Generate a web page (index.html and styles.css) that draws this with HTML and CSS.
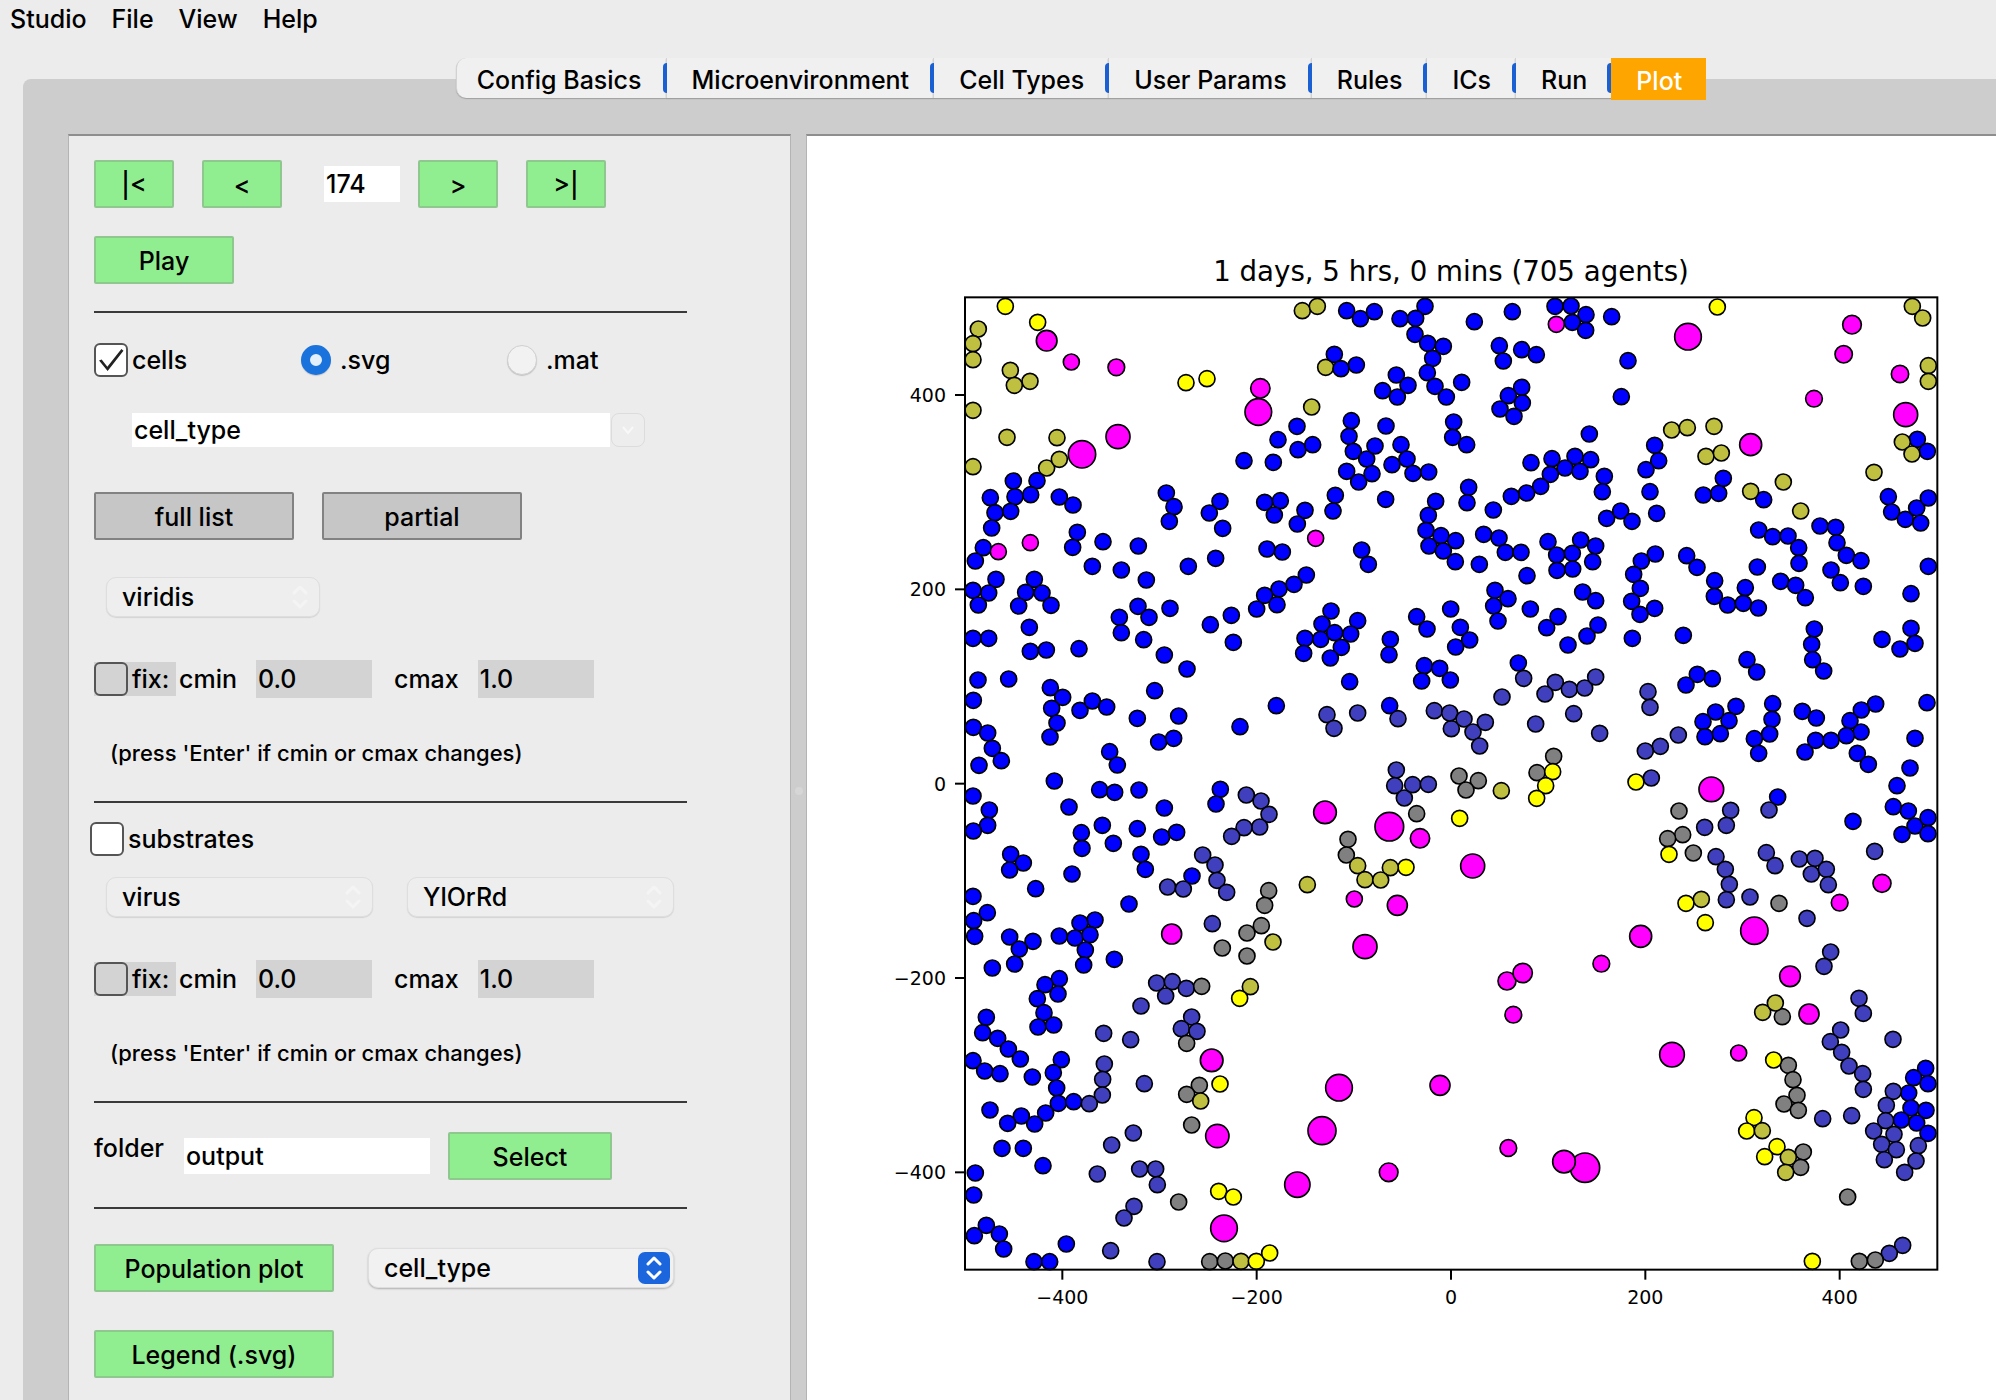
FILE: index.html
```html
<!DOCTYPE html>
<html lang="en">
<head>
    <meta charset="UTF-8">
    <meta name="viewport" content="width=device-width, initial-scale=1.0">
    <title>Studio</title>
    <link rel="stylesheet" href="styles.css">
</head>
<body>
    <nav class="menubar">
        <button type="button">Studio</button>
        <button type="button">File</button>
        <button type="button">View</button>
        <button type="button">Help</button>
    </nav>

    <div class="tabs" role="tablist">
        <button type="button" role="tab">Config Basics</button>
        <button type="button" role="tab">Microenvironment</button>
        <button type="button" role="tab">Cell Types</button>
        <button type="button" role="tab">User Params</button>
        <button type="button" role="tab">Rules</button>
        <button type="button" role="tab">ICs</button>
        <button type="button" role="tab">Run</button>
        <button type="button" role="tab" class="active" aria-selected="true">Plot</button>
    </div>

    <main class="frame">
        <form class="controls">
            <div class="row player">
                <button type="button" class="btn step">|&lt;</button>
                <button type="button" class="btn step">&lt;</button>
                <input type="text" class="field frame-number" value="174" aria-label="Frame">
                <button type="button" class="btn step">&gt;</button>
                <button type="button" class="btn step">&gt;|</button>
            </div>
            <div class="row play-row">
                <button type="button" class="btn play">Play</button>
            </div>

            <hr>

            <div class="row cells-row">
                <label class="check cells"><input type="checkbox" checked>cells</label>
                <label class="radio"><input type="radio" name="format" checked>.svg</label>
                <label class="radio"><input type="radio" name="format">.mat</label>
            </div>
            <div class="row combo">
                <input type="text" class="field" value="cell_type" aria-label="Cell variable">
                <button type="button" class="combo-arrow" aria-label="Show list">
                    <svg viewBox="0 0 16 16"><path d="M3 5l5 6 5-6"/></svg>
                </button>
            </div>
            <div class="row list-row">
                <button type="button" class="btn grey">full list</button>
                <button type="button" class="btn grey">partial</button>
            </div>
            <div class="row select-row">
                <span class="select disabled cmap">
                    <select aria-label="Cell colormap"><option>viridis</option></select>
                    <svg viewBox="0 0 32 32"><path d="M10 12l6-6 6 6M10 20l6 6 6-6"/></svg>
                </span>
            </div>
            <div class="row fix-row">
                <label class="check fix"><input type="checkbox">fix:</label>
                <label for="cells-cmin">cmin</label>
                <input type="text" id="cells-cmin" class="range" value="0.0">
                <label for="cells-cmax">cmax</label>
                <input type="text" id="cells-cmax" class="range" value="1.0">
            </div>
            <p class="hint">(press 'Enter' if cmin or cmax changes)</p>

            <hr>

            <div class="row substrates-row">
                <label class="check"><input type="checkbox">substrates</label>
            </div>
            <div class="row select-row near">
                <span class="select disabled substrate">
                    <select aria-label="Substrate"><option>virus</option></select>
                    <svg viewBox="0 0 32 32"><path d="M10 12l6-6 6 6M10 20l6 6 6-6"/></svg>
                </span>
                <span class="select disabled substrate">
                    <select aria-label="Substrate colormap"><option>YlOrRd</option></select>
                    <svg viewBox="0 0 32 32"><path d="M10 12l6-6 6 6M10 20l6 6 6-6"/></svg>
                </span>
            </div>
            <div class="row fix-row">
                <label class="check fix"><input type="checkbox">fix:</label>
                <label for="sub-cmin">cmin</label>
                <input type="text" id="sub-cmin" class="range" value="0.0">
                <label for="sub-cmax">cmax</label>
                <input type="text" id="sub-cmax" class="range" value="1.0">
            </div>
            <p class="hint">(press 'Enter' if cmin or cmax changes)</p>

            <hr>

            <div class="row folder-row">
                <label for="folder">folder</label>
                <input type="text" id="folder" class="field" value="output">
                <button type="button" class="btn">Select</button>
            </div>

            <hr>

            <div class="row population-row">
                <button type="button" class="btn wide">Population plot</button>
                <span class="select">
                    <select aria-label="Population variable"><option>cell_type</option></select>
                    <svg viewBox="0 0 32 32"><path d="M10 12l6-6 6 6M10 20l6 6 6-6"/></svg>
                </span>
            </div>
            <div class="row legend-row">
                <button type="button" class="btn wide">Legend (.svg)</button>
            </div>
        </form>

        <div class="splitter"></div>

        <section class="canvas">
            <svg class="plot" viewBox="-459 -464 3567 3792">
                <text class="title" x="1473" y="-29">1 days, 5 hrs, 0 mins (705 agents)</text>
                <g id="agents"></g>
                <rect class="axes" x="15" y="20" width="2917" height="2917"/>
                <g id="ticks"></g>
            </svg>
        </section>
    </main>

    <script src="script.js"></script>
</body>
</html>
```

FILE: styles.css
```css
* {
    box-sizing: border-box;
}
body {
    display: flex;
    flex-direction: column;
    height: 100vh;
    margin: 0;
    overflow: hidden;
    background-color: #ececec;
    color: #000;
    font-family: Inter, "Liberation Sans", sans-serif;
    font-size: 25px;
    font-weight: 500;
    line-height: 30px;
}
button, input, select {
    margin: 0;
    color: inherit;
    font: inherit;
}

/* menu */
.menubar {
    display: flex;
    gap: 25px;
    height: 58px;
    padding: 4px 10px;
}
.menubar button {
    height: 30px;
    padding: 0;
    border: none;
    background: none;
}

/* tabs */
.tabs {
    position: relative;
    z-index: 1;
    display: flex;
    justify-content: center;
    height: 42px;
    padding-left: 166px;
}
.tabs button {
    position: relative;
    height: 40px;
    padding: 3px 24px 0 25px;
    border: none;
    border-left: 1px solid #d2d2d2;
    background-color: #f0f0f0;
    box-shadow: 0 1px 1px #a0a0a0;
    white-space: nowrap;
}
.tabs button:first-child {
    padding-left: 20px;
    border-radius: 10px 0 0 10px;
}
.tabs button + button::before {
    content: "";
    position: absolute;
    top: 5px;
    left: -4px;
    width: 4px;
    height: 30px;
    border-radius: 4px 0 0 4px;
    background-color: #1a60d2;
}
.tabs .active {
    height: 42px;
    border: none;
    background-color: #ffa500;
    box-shadow: none;
    color: #fff;
}

/* main area */
.frame {
    display: flex;
    flex: 1;
    min-height: 0;
    margin: -21px 0 0 23px;
    padding: 55px 0 0 45px;
    border-radius: 8px 0 0 0;
    background-color: #cdcdcd;
}
.controls {
    flex: 0 0 723px;
    padding: 24px 24px 0 25px;
    border: 1px solid #b4b4b4;
    border-top: 2px solid #8e8e8e;
    border-bottom: none;
    background-color: #ececec;
}
.splitter {
    display: flex;
    flex: 0 0 15px;
    align-items: center;
    justify-content: center;
}
.splitter::before {
    content: "";
    width: 8px;
    height: 8px;
    margin-bottom: -48px;
    border-radius: 50%;
    background-color: #d6d6d6;
}
.canvas {
    flex: 1;
    min-width: 0;
    border-top: 2px solid #8e8e8e;
    border-left: 1px solid #b4b4b4;
    background-color: #fff;
}

/* controls */
.row {
    display: flex;
    align-items: center;
}
hr {
    width: 593px;
    height: 2px;
    margin: 0;
    border: none;
    background-color: #3a3a3a;
}
.btn {
    height: 48px;
    padding: 2px 0 0;
    border: 2px solid #8fc88f;
    border-radius: 2px;
    background-color: #90ee90;
}
.btn.grey {
    width: 200px;
    border-color: #828282;
    background-color: #c6c6c6;
}
.btn.wide {
    width: 240px;
}
.step {
    width: 80px;
}
.play {
    width: 140px;
}
.field {
    height: 36px;
    padding: 0 2px;
    border: none;
    background-color: #fff;
}
.player {
    gap: 28px;
}
.frame-number {
    width: 76px;
    margin: 0 -10px 0 14px;
}
.play-row {
    margin: 28px 0 27px;
}
.cells-row {
    height: 34px;
    margin: 30px 0 36px;
}
.check {
    display: flex;
    align-items: center;
    gap: 4px;
}
.check input {
    display: grid;
    place-content: center;
    width: 34px;
    height: 34px;
    border: 2px solid #555;
    border-radius: 6px;
    background-color: #fff;
    appearance: none;
}
.check input:checked::before {
    content: "";
    width: 26px;
    height: 26px;
    background-color: #222;
    clip-path: polygon(4% 52%, 14% 48%, 36% 76%, 90% 8%, 98% 14%, 37% 92%);
}
.cells {
    width: 207px;
}
.radio {
    display: flex;
    align-items: center;
    gap: 9px;
    width: 206px;
}
.radio input {
    width: 30px;
    height: 30px;
    border: 1px solid #d0d0d0;
    border-radius: 50%;
    background-color: #f2f2f2;
    box-shadow: 0 1px 1px #c4c4c4;
    appearance: none;
}
.radio input:checked {
    border: 9px solid #1a72dc;
    background-color: #e4effc;
}
.combo {
    gap: 1px;
    margin-left: 38px;
}
.combo .field {
    width: 478px;
    height: 34px;
}
.combo-arrow {
    width: 34px;
    height: 34px;
    padding: 8px;
    border: 1px solid #dcdcdc;
    border-radius: 8px;
    background-color: #ededed;
}
.combo-arrow svg {
    display: block;
    fill: none;
    stroke: #f8f8f8;
    stroke-width: 2;
}
.list-row {
    gap: 28px;
    margin: 45px 0 37px;
}
.select-row {
    gap: 34px;
    margin-left: 12px;
}
.select-row.near {
    margin-top: 21px;
}
.select {
    position: relative;
    width: 306px;
}
.select select {
    display: block;
    width: 100%;
    height: 40px;
    padding: 0 15px;
    border: 1px solid #dedede;
    border-radius: 10px;
    background-color: #f1f1f1;
    box-shadow: 0 1px 2px #b0b0b0;
    appearance: none;
}
.select svg {
    position: absolute;
    top: 4px;
    right: 4px;
    width: 32px;
    height: 32px;
    border-radius: 7px;
    background-color: #1b65dd;
    fill: none;
    stroke: #fff;
    stroke-width: 3;
    stroke-linecap: round;
    stroke-linejoin: round;
    pointer-events: none;
}
.select.disabled select {
    background-color: #eee;
    box-shadow: 0 1px 1px #d4d4d4;
}
.select.disabled svg {
    background: none;
    stroke: #f4f4f4;
}
.cmap {
    width: 214px;
}
.substrate {
    width: 267px;
}
.fix-row {
    margin: 43px 0 41px;
}
.fix {
    width: 82px;
    margin-right: 3px;
    background-color: #d3d3d3;
}
.fix input {
    background-color: #d3d3d3;
}
.range {
    width: 116px;
    height: 38px;
    margin: 0 22px 0 19px;
    padding: 0 2px;
    border: none;
    background-color: #d3d3d3;
}
.hint {
    height: 28px;
    margin: 0 0 34px 16px;
    font-size: 22px;
    line-height: 28px;
}
.substrates-row {
    margin: 19px 0 0 -4px;
}
.folder-row {
    margin: 29px 0 27px;
}
.folder-row label {
    width: 90px;
    padding-bottom: 16px;
}
.folder-row .field {
    width: 246px;
    margin-right: 18px;
}
.folder-row .btn {
    width: 164px;
}
.population-row {
    gap: 34px;
    margin: 35px 0 38px;
}

/* plot */
.plot {
    display: block;
    width: 100%;
    font-family: "DejaVu Sans", sans-serif;
    font-weight: 400;
}
.plot text {
    font-size: 57px;
}
.plot .title {
    font-size: 83px;
    text-anchor: middle;
}
.axes {
    fill: none;
    stroke: #000;
    stroke-width: 6;
}
.tick {
    stroke: #000;
    stroke-width: 6;
}
.x-label {
    text-anchor: middle;
}
.y-label {
    text-anchor: end;
}
.agent {
    stroke: #000;
    stroke-width: 5;
}
.blue {
    fill: #0000ff;
}
.indigo {
    fill: #4040bf;
}
.olive {
    fill: #bfbf40;
}
.yellow {
    fill: #ffff00;
}
.magenta {
    fill: #ff00ff;
}
.grey-agent {
    fill: #808080;
}
```

FILE: script.js
```js
const SVG_NS = "http://www.w3.org/2000/svg";
const RADIUS = 24;

// Agents by block of the canvas: "x,y" or "x,y,radius", relative to the block's corner
const blocks = [
    {
        x: 0, y: 0,
        yellow: "136,47 233,95 678,276 741,264",
        olive: "55,115 39,159 39,207 151,239 163,284 210,272 39,359 141,440 291,441 260,532 298,506 39,528",
        blue: "954,447 852,510 940,515 160,571 231,570 91,621 165,618 212,612 298,619 339,643 105,666 152,662 95,712 619,607 642,648 628,692 780,632 748,667 788,713 914,635 961,630 943,673 352,725 338,770 429,753 535,766 70,771 46,811 397,827 484,838 559,868 685,827 767,803 921,775 967,784 108,866 223,866 39,899 86,907 197,905 246,907 55,943 176,946 273,944 534,947 567,980 630,953 957,895 914,914 951,942 890,955 814,974 478,980",
        magenta: "260,150,31 334,214,24 469,230,25 901,293,29 895,364,40 474,438,36 366,491,41 211,756,24 115,783,24"
    },
    {
        x: 975, y: 0,
        olive: "52,60 97,47 122,230 80,349",
        magenta: "814,101,24 92,743,24",
        blue: "185,60 226,84 268,63 420,47 345,84 392,83 390,131 428,158 475,167 443,203 427,246 450,287 484,319 530,275 568,93 682,63 810,47 858,46 903,72 862,95 902,119 643,165 655,211 710,177 754,192 148,191 168,234 214,223 334,253 369,284 293,300 337,319 710,290 670,315 712,337 645,355 687,377 36,407 39,477 83,462 199,390 192,437 303,406 205,482 245,505 270,466 348,462 366,505 321,522 384,548 431,544 185,542 221,574 261,549 506,394 503,440 545,462 913,430 738,516 801,504 870,497 917,507 840,532 885,542 796,551 767,587 725,607 679,617 958,557 952,603 625,658 551,590 546,636 452,632 430,674 423,719 468,735 512,750 432,766 475,781 511,813 583,821 151,614 144,661 302,626 60,659 37,700 596,731 642,742 661,785 708,785 789,753 887,748 932,766 815,793 862,788 923,813 816,839 863,835 726,855 965,683 230,778 250,821 64,853 27,881 630,899 669,924 626,946 736,955 893,904 932,930 497,955 138,961"
    },
    {
        x: 1950, y: 0,
        yellow: "322,49",
        magenta: "234,138,40 726,102,28 701,191,26 870,250,26 612,324,25 887,372,36 422,462,33",
        blue: "5,78 54,210 34,318 134,464 146,510 108,537 120,603 140,668 340,563 280,613 326,608 461,627 922,446 952,482 835,618 845,664 886,686 920,652 955,622 932,697 32,661 66,692 446,718 488,738 534,736 566,771 567,818 630,706 677,710 681,756 709,794 753,810 663,838 691,876 760,887 955,827 903,909 442,829 512,872 557,884 586,921 136,790 94,811 71,851 91,893 65,932 134,953 90,971 230,795 261,830 314,870 313,917 353,943 400,938 406,891 445,952",
        olive: "907,47 938,82 955,225 955,272 185,418 232,411 312,407 288,497 334,487 877,454 906,490 792,545 520,574 422,602 572,661"
    },
    {
        x: 0, y: 975,
        blue: "208,35 484,51 551,72 751,27 820,80 39,68 86,68 211,107 259,103 357,99 613,118 681,160 54,193 146,190 40,254 271,216 308,245 275,278 291,322 270,364 360,284 397,256 440,274 584,225 532,308 656,301 949,270 840,333 596,379 641,368 40,335 83,352 97,398 124,435 57,449 449,408 472,448 283,496 419,522 464,530 537,523 781,521 768,565 39,541 88,583 83,629 40,646 327,574 613,577 427,629 364,651 366,698 460,683 532,639 605,664 650,650 152,716 190,742 149,763 543,716 556,761 336,775 227,819 696,781 39,842 82,891 41,915 44,962 507,865 405,913 360,922 345,967 390,957 298,961 149,964 219,977",
        indigo: "859,538 903,556 927,596 899,634 852,636 815,662 728,718 765,748 771,794 800,830 623,814 670,820 757,924",
        grey: "926,825 914,869 904,930 861,952",
        olive: "939,979",
        magenta: "635,955,30"
    },
    {
        x: 975, y: 975,
        blue: "111,25 218,15 395,3 426,40 60,68 107,71 149,51 197,55 169,95 136,127 56,113 316,71 312,117 526,35 554,73 512,94 639,16 785,36 819,3 849,88 906,61 939,28 418,150 464,158 410,196 496,193 194,198 700,142 314,270",
        indigo: "716,188 811,200 780,235 853,221 899,217 932,184 651,244 866,294 752,325 944,353 126,297 147,338 218,292 339,309 448,285 499,339 494,292 537,310 564,349 601,320 584,391 334,463 329,510 358,547 383,507 430,506",
        grey: "806,422 756,471 522,481 580,495 543,523 395,594 189,671 184,718",
        yellow: "803,468 782,510 755,548 524,608 363,755",
        olive: "649,525 218,750 316,756 240,792 287,793 67,807",
        magenta: "120,590,34 313,633,43 405,668,29 563,751,36 208,850,24 337,869,30"
    },
    {
        x: 1950, y: 975,
        blue: "67,68 220,59 613,40 605,86 608,132 641,166 816,71 903,38 915,83 870,100 411,132 440,169 262,176 307,189 228,208 378,272 317,289 357,315 279,318 285,363 331,354 488,264 486,311 479,355 433,369 446,413 577,287 619,307 797,265 754,283 720,315 753,349 709,360 663,374 617,374 585,409 742,413 775,446 951,261 915,368 900,457 861,510 850,573 895,586 915,631 954,606 876,656 954,654 729,617 503,544",
        indigo: "114,228 120,275 205,358 151,392 106,406 124,487 362,584 349,629 284,635 477,583 318,723 346,761 358,806 349,852 420,844 469,711 495,750 568,730 615,728 604,775 649,761 655,807 794,707 591,908",
        grey: "207,586 218,657 173,669 250,712 507,863",
        yellow: "78,499 177,716 228,863 286,921",
        olive: "274,851",
        magenta: "304,521,37 816,803,27 689,861,25 92,962,33 433,945,41"
    },
    {
        x: 0, y: 1950,
        blue: "178,25 164,70 97,82 376,28 371,73 463,56 298,114 255,132 294,160 232,174 252,216 234,259 281,253 79,230 68,276 113,293 145,325 181,355 39,360 74,391 120,399 217,409 304,357 280,396 290,442 295,488 341,483 257,517 224,550 184,526 143,548 90,508 126,623 190,623 249,675 46,697 41,763 79,854 43,885 118,880 131,925 319,910 222,963 269,963",
        indigo: "590,127 637,123 679,143 617,166 543,196 431,278 512,297 695,229 664,264 711,272 433,370 428,416 427,463 388,489 553,429 520,577 455,613 412,700 539,685 587,685 592,732 522,797 492,832 452,930 591,963",
        grey: "787,22 861,46 725,137 680,308 718,434 680,461 695,553 656,784 749,963 796,961",
        olive: "871,138 722,481 843,962",
        yellow: "839,173 780,430 776,752 820,769 889,962 929,937",
        magenta: "755,359,34 772,586,35 792,863,40"
    },
    {
        x: 975, y: 1950,
        magenta: "240,18,36 666,121,27 713,97,29 949,69,25 685,222,25 162,441,40 111,570,42 465,434,30 37,732,38 311,695,28 670,622,25 900,681,44 837,663,34"
    },
    {
        x: 1950, y: 1950,
        magenta: "540,107,31 597,220,30 186,342,37 386,337,24",
        blue: "947,383 911,411 954,429 896,457 903,502 948,509 920,547 874,538 954,578",
        indigo: "662,34 642,77 747,173 760,218 692,268 661,303 695,335 717,376 758,399 760,446 849,296 638,534 725,525 850,452 829,494 827,540 791,571 852,581 815,611 859,627 823,657 925,615 918,661 884,695 878,914 838,938",
        grey: "517,228 535,374 549,417 561,464 522,490 565,509 580,634 572,680 713,769 748,962 796,958",
        yellow: "491,358 432,531 410,571 501,618 464,648 607,962",
        olive: "458,215 496,187 457,570 535,650 527,695"
    }
];

function add(parent, name, attrs, text) {
    const node = document.createElementNS(SVG_NS, name);
    for (const key in attrs) {
        node.setAttribute(key, attrs[key]);
    }
    if (text) node.textContent = text;
    parent.appendChild(node);
}

// Draw agents
function drawAgents() {
    const group = document.getElementById("agents");
    blocks.forEach(({ x, y, ...types }) => {
        Object.keys(types).forEach(type => {
            const color = type === "grey" ? "grey-agent" : type;
            types[type].split(" ").forEach(item => {
                const [cx, cy, r = RADIUS] = item.split(",").map(Number);
                add(group, "circle", { class: `agent ${color}`, cx: x + cx, cy: y + cy, r });
            });
        });
    });
}

// Draw ticks and their labels
function drawTicks() {
    const group = document.getElementById("ticks");
    [-400, -200, 0, 200, 400].forEach(value => {
        const offset = Math.round(value * 2.914);
        const x = 1473 + offset;
        const y = 1479 - offset;
        const label = String(value).replace("-", "\u2212");
        add(group, "line", { class: "tick", x1: x, x2: x, y1: 2937, y2: 2967 });
        add(group, "text", { class: "x-label", x: x, y: 3041 }, label);
        add(group, "line", { class: "tick", x1: -15, x2: 15, y1: y, y2: y });
        add(group, "text", { class: "y-label", x: -42, y: y + 21 }, label);
    });
}

drawAgents();
drawTicks();
```
